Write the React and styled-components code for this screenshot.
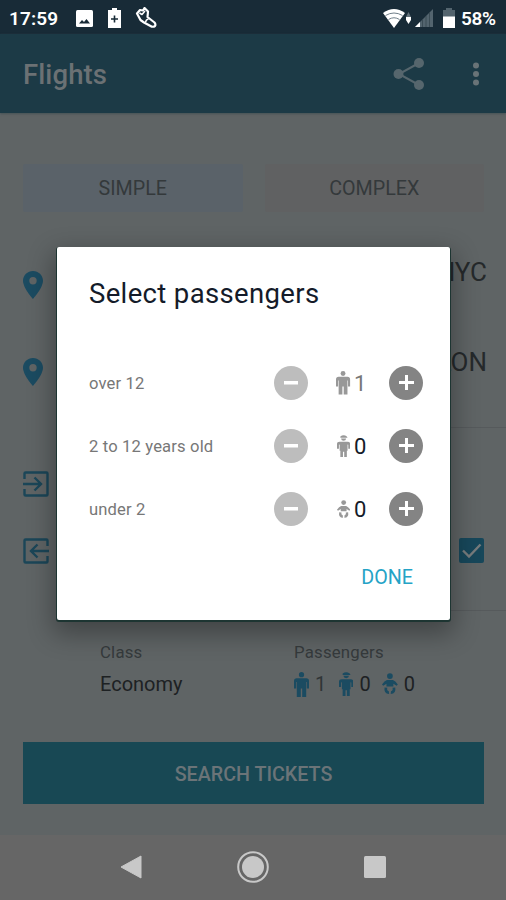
import styled, { createGlobalStyle } from 'styled-components';

const GlobalStyle = createGlobalStyle`
  * {
    box-sizing: border-box;
  }
  body {
    margin: 0;
    font-family: Roboto, "Liberation Sans", sans-serif;
    overflow: hidden;
  }
  button {
    font-family: inherit;
    border: none;
    padding: 0;
  }
  svg {
    display: block;
    flex: none;
  }
`

const Screen = styled.div`
  position: relative;
  width: 506px;
  height: 900px;
  display: flex;
  flex-direction: column;
  background-color: #5f6465;
  overflow: hidden;
`

const StatusBar = styled.div`
  height: 34px;
  padding: 2px 7px 0 9px;
  display: flex;
  justify-content: space-between;
  align-items: center;
  background-color: #182b37;
  color: #fff;
  font-size: 19px;
  font-weight: 600;
`
const StatusGroup = styled.div`
  display: flex;
  align-items: center;
`
const StatusText = styled.span`
  width: ${props => props.$width}px;
  margin-left: ${props => props.$gap || 0}px;
  white-space: nowrap;
  letter-spacing: ${props => props.$spacing || 0}px;
`
const StatusIcon = styled.svg`
  margin-left: ${props => props.$gap || 0}px;
`

const AppBar = styled.header`
  height: 79px;
  padding: 0 18px 0 23px;
  display: flex;
  align-items: center;
  background-color: #1c3a46;
  box-shadow: 0 1px 2px #465256;
`
const AppTitle = styled.h1`
  flex: 1;
  margin: 2px 0 0;
  font-size: 27.5px;
  font-weight: 500;
  letter-spacing: 0.1px;
  color: #6b7174;
`
const AppActions = styled.div`
  display: flex;
  align-items: center;
  gap: 39px;
`

const Content = styled.main`
  height: 722px;
  padding-top: 51px;
  display: flex;
  flex-direction: column;
`
const Tabs = styled.div`
  display: flex;
  gap: 22px;
  margin: 0 22px 29px 23px;
`
const Tab = styled.button`
  flex: 1;
  height: 48px;
  border-radius: 2px;
  font-size: 19.7px;
  color: #34393b;
  background-color: ${props => props.$active ? '#5a6269' : '#606162'};
`
const PlaceRow = styled.div`
  height: ${props => props.$height}px;
  padding: 0 19px 0 23px;
  display: flex;
  justify-content: space-between;
`
const PlaceIcon = styled.div`
  padding-top: 30px;
`
const PlaceCode = styled.span`
  padding-top: ${props => props.$top}px;
  font-size: 26px;
  line-height: 30px;
  color: #25292b;
`
const DateRow = styled.div`
  height: ${props => props.$height}px;
  padding: ${props => props.$top}px 22px 0 23px;
  display: flex;
  justify-content: space-between;
`
const Divider = styled.div`
  height: 1px;
  margin-left: 100px;
  background-color: #565a5c;
`
const Options = styled.div`
  display: flex;
  height: 131px;
  padding: 30px 0 0 100px;
`
const Option = styled.div`
  width: 194px;
`
const OptionLabel = styled.div`
  font-size: 16.8px;
  line-height: 22px;
  letter-spacing: 0.2px;
  color: #353a3c;
`
const OptionValue = styled.div`
  display: flex;
  align-items: center;
  height: 26px;
  margin-top: 8px;
  font-size: 20px;
  color: #1d2123;
`
const PassengerCount = styled.span`
  display: flex;
  align-items: center;
  gap: 6px;
  width: ${props => props.$width}px;
  color: ${props => props.$muted ? '#303537' : '#1d2123'};
`
const SearchButton = styled.button`
  height: 62px;
  margin: 0 22px 0 23px;
  padding-top: 2px;
  background-color: #184854;
  color: #6b7478;
  font-size: 19.7px;
  font-weight: 500;
`

const NavBar = styled.nav`
  height: 65px;
  padding: 0 120px 1px 120px;
  display: flex;
  align-items: center;
  justify-content: space-between;
  background-color: #666;
`

const Dialog = styled.section`
  position: absolute;
  left: 57px;
  top: 247px;
  width: 393px;
  height: 373px;
  padding: 30px 27px 0 32px;
  border-radius: 2px;
  background-color: #fff;
  box-shadow: 0 1px 0 1px #1d3532, 0 10px 26px 4px rgba(0, 0, 0, 0.32);
`
const DialogTitle = styled.h2`
  margin: 0 0 40px;
  font-size: 27.5px;
  font-weight: 400;
  line-height: 34px;
  letter-spacing: 0.35px;
  color: #141b29;
`
const AgeRow = styled.div`
  height: 63px;
  display: flex;
  align-items: center;
`
const AgeLabel = styled.span`
  flex: 1;
  padding-top: 1px;
  font-size: 16.6px;
  letter-spacing: 0.15px;
  color: #777;
`
const RoundButton = styled.button`
  width: 34px;
  height: 34px;
  border-radius: 50%;
  display: flex;
  align-items: center;
  justify-content: center;
  background-color: ${props => props.$disabled ? '#bdbdbd' : '#848484'};
`
const AgeCount = styled.div`
  width: 81px;
  padding: 1px 0 0 28px;
  display: flex;
  align-items: center;
  gap: 3px;
  font-size: 22px;
  color: ${props => props.$muted ? '#777' : '#141b29'};
`
const DialogFooter = styled.div`
  display: flex;
  justify-content: flex-end;
  padding: 26px 10px 0 0;
`
const DoneButton = styled.button`
  background: none;
  font-size: 19.7px;
  line-height: 24px;
  color: #25a3c6;
`

const PinIcon = () => (
  <svg width="20" height="28" viewBox="0 0 20 28">
    <path fill="#1b4b61" fillRule="evenodd" d="M10 0C4.5 0 0 4.4 0 9.8 0 17 10 28 10 28s10-11 10-18.2C20 4.4 15.5 0 10 0zm0 13.500a3.700 3.700 0 1 1 0-7.400 3.700 3.700 0 0 1 0 7.400z" />
  </svg>
)

const DepartIcon = () => (
  <svg width="26" height="26" viewBox="0 0 26 26" fill="none" stroke="#1b4658" strokeWidth="2.4">
    <path d="M1.500 8V2.500q0-1 1-1h21q1 0 1 1v21q0 1-1 1h-21q-1 0-1-1V18M0 13h17M11.500 6.500L18 13l-6.500 6.500" />
  </svg>
)

const ReturnIcon = () => (
  <svg width="26" height="26" viewBox="0 0 26 26" fill="none" stroke="#1b4658" strokeWidth="2.4">
    <path d="M24.500 8V2.500q0-1-1-1h-21q-1 0-1 1v21q0 1 1 1h21q1 0 1-1V18M26 13H9M14.500 6.500L8 13l6.500 6.500" />
  </svg>
)

const CheckIcon = () => (
  <svg width="25" height="25" viewBox="0 0 25 25">
    <rect width="25" height="25" rx="2" fill="#17475a" />
    <path d="M4 12.500l6 6L21.500 6.500" fill="none" stroke="#777b7c" strokeWidth="2.4" />
  </svg>
)

const AdultIcon = ({ size, color }) => (
  <svg width={size * 0.6} height={size} viewBox="0 0 15 25" fill={color}>
    <circle cx="7.5" cy="2.7" r="2.6" />
    <path d="M2.800 6.200h9.400Q15 6.200 15 9v7.500h-2.200V10h-.6v15H8.200v-8.500H6.800V25H2.800V10h-.6v6.500H0V9q0-2.800 2.800-2.800z" />
  </svg>
)

const ChildIcon = ({ size, color }) => (
  <svg width={size * 0.6} height={size} viewBox="0 0 15 25" fill={color}>
    <path d="M3.800 1.600Q7.500-1 11.200 1.600l.8 1.500H3.800zM4.600 4h5.800Q10.200 6.600 7.500 6.600T4.600 4z" />
    <path d="M3 7.600h9q3 0 3 2.600v5.500h-2.200V11l-.8-.2V18h-.8v7H8.200v-6H6.800v6H3.800v-7H3v-7.200l-.8.2v4.700H0v-5.500q0-2.600 3-2.600z" />
  </svg>
)

const BabyIcon = ({ size, color }) => (
  <svg width={size * 0.72} height={size} viewBox="0 0 16 22" fill={color}>
    <circle cx="8" cy="3" r="2.9" />
    <path d="M5 7h6q2.500 1 5 4.500l-1.200 1.300L11.500 10.800v2.700h-7v-2.700L1.200 12.800 0 11.500Q2.500 8 5 7z" />
    <path d="M2.600 14.500l2.800.3q-.9 2.700 1.500 3.500l.3 2.900Q1.500 20.900 2.600 14.500zM13.400 14.500l-2.800.3q.9 2.700-1.500 3.500l-.3 2.900q5.700-.3 4.600-6.700z" />
  </svg>
)

const icons = { adult: AdultIcon, child: ChildIcon, baby: BabyIcon }

const ages = [
  { label: 'over 12', kind: 'adult', count: 1, size: 23.5 },
  { label: '2 to 12 years old', kind: 'child', count: 0, size: 22 },
  { label: 'under 2', kind: 'baby', count: 0, size: 18.5 },
]

const IconSlot = styled.span`
  width: 15px;
  display: flex;
  justify-content: center;
`

const Age = ({ label, kind, count, size }) => {
  const Icon = icons[kind]
  return (
    <AgeRow>
      <AgeLabel>{label}</AgeLabel>
      <RoundButton $disabled>
        <svg width="14" height="4"><rect width="14" height="3.5" fill="#fff" /></svg>
      </RoundButton>
      <AgeCount $muted={count > 0}>
        <IconSlot><Icon size={size} color="#989898" /></IconSlot>
        {count}
      </AgeCount>
      <RoundButton>
        <svg width="15" height="15" viewBox="0 0 15 15">
          <path d="M7.500 0v15M0 7.500h15" stroke="#fff" strokeWidth="3" />
        </svg>
      </RoundButton>
    </AgeRow>
  )
}

const Status = () => (
  <StatusBar>
    <StatusGroup>
      <StatusText $width={50} $spacing={0.1}>17:59</StatusText>
      <StatusIcon $gap={17} width="17" height="17" viewBox="0 0 17 17">
        <rect width="17" height="17" rx="1.5" fill="#fff" />
        <path d="M3 13.500l3-3.500 2 2 2.500-3 3.500 4.500z" fill="#182b37" />
      </StatusIcon>
      <StatusIcon $gap={15} width="13" height="20" viewBox="0 0 13 20">
        <path d="M4 0h5v2h4v18H0V2h4z" fill="#fff" />
        <path d="M6.500 7.500v7M3 11h7" stroke="#182b37" strokeWidth="1.6" />
      </StatusIcon>
      <StatusIcon $gap={14} width="22" height="22" viewBox="0 0 22 22" fill="none" stroke="#fff" strokeLinejoin="round">
        <path d="M2 6.500L5 3l3 .5L9.500 1 13 4.500 12.500 10l7 5.500q1.500 2 .5 3.500-2 1.500-4.500 0L9 15.500 5.500 13z" strokeWidth="2.2" />
        <path d="M4.500 6l2.500 1.500L10 4M13.500 12q-2.500.5-3 3" strokeWidth="1.6" />
      </StatusIcon>
    </StatusGroup>
    <StatusGroup>
      <StatusIcon width="22" height="19" viewBox="0 0 22 19">
        <path d="M0 4Q11-4 22 4L11 19z" fill="#fff" />
        <path d="M2.500 6.500Q11 1.500 19.500 6.500M5.500 10.500Q11 7 16.500 10.500" fill="none" stroke="#71808a" strokeWidth="1" />
      </StatusIcon>
      <StatusIcon $gap={1} width="5" height="14" viewBox="0 0 5 14">
        <path d="M0 6l2.500-5L5 6z" fill="#62717a" />
        <path d="M0 6h5v3l-2.500 4L0 9z" fill="#fff" />
      </StatusIcon>
      <StatusIcon $gap={4} width="18" height="18" viewBox="0 0 18 18">
        <path d="M18 0v18H0z" fill="#53646e" />
        <path d="M5 13v5H0z" fill="#fff" />
        <path d="M7.500 10.500V18M11 7v11M14.500 3.500V18" stroke="#35464f" strokeWidth=".8" />
      </StatusIcon>
      <StatusIcon $gap={10} width="12" height="20" viewBox="0 0 12 20">
        <path d="M3 0h6v2h3v7H0V2h3z" fill="#53646e" />
        <path d="M0 8.500h12V20H0z" fill="#fff" />
      </StatusIcon>
      <StatusText $gap={6} $width={38} $spacing={-0.3}>58%</StatusText>
    </StatusGroup>
  </StatusBar>
)

const App = () => {
  return (
    <>
      <GlobalStyle />
      <Screen>
        <Status />
        <AppBar>
          <AppTitle>Flights</AppTitle>
          <AppActions>
            <svg width="32" height="34" viewBox="0 0 32 34" fill="#56666d">
              <path d="M26 6L6 17l20 11" fill="none" stroke="#56666d" strokeWidth="2" />
              <circle cx="26" cy="6" r="5" />
              <circle cx="5.5" cy="17" r="5" />
              <circle cx="26" cy="28" r="5" />
            </svg>
            <svg width="24" height="24" viewBox="0 0 24 24" fill="#697377">
              <circle cx="12" cy="3.5" r="3" />
              <circle cx="12" cy="12" r="3" />
              <circle cx="12" cy="20.5" r="3" />
            </svg>
          </AppActions>
        </AppBar>
        <Content>
          <Tabs>
            <Tab $active>SIMPLE</Tab>
            <Tab>COMPLEX</Tab>
          </Tabs>
          <PlaceRow $height={87}>
            <PlaceIcon><PinIcon /></PlaceIcon>
            <PlaceCode $top={16}>NYC</PlaceCode>
          </PlaceRow>
          <PlaceRow $height={99}>
            <PlaceIcon><PinIcon /></PlaceIcon>
            <PlaceCode $top={19}>LON</PlaceCode>
          </PlaceRow>
          <Divider />
          <DateRow $height={96} $top={43}>
            <DepartIcon />
          </DateRow>
          <DateRow $height={86} $top={14}>
            <ReturnIcon />
            <CheckIcon />
          </DateRow>
          <Divider />
          <Options>
            <Option>
              <OptionLabel>Class</OptionLabel>
              <OptionValue>Economy</OptionValue>
            </Option>
            <Option>
              <OptionLabel>Passengers</OptionLabel>
              <OptionValue>
                <PassengerCount $width={45} $muted><AdultIcon size={25} color="#1b4b61" />1</PassengerCount>
                <PassengerCount $width={43}><ChildIcon size={24} color="#1b4b61" />0</PassengerCount>
                <PassengerCount $width={40}><BabyIcon size={22} color="#1b4b61" />0</PassengerCount>
              </OptionValue>
            </Option>
          </Options>
          <SearchButton>SEARCH TICKETS</SearchButton>
        </Content>
        <NavBar>
          <svg width="22" height="24" viewBox="0 0 22 24">
            <path d="M21 1v22L1 12z" fill="#c8c8c8" stroke="#c8c8c8" strokeLinejoin="round" />
          </svg>
          <svg width="32" height="32" viewBox="0 0 32 32">
            <circle cx="16" cy="16" r="14.8" fill="none" stroke="#c8c8c8" strokeWidth="2" />
            <circle cx="16" cy="16" r="11" fill="#c8c8c8" />
          </svg>
          <svg width="22" height="22"><rect width="22" height="22" rx="1.5" fill="#c8c8c8" /></svg>
        </NavBar>
        <Dialog>
          <DialogTitle>Select passengers</DialogTitle>
          {ages.map(age => <Age key={age.kind} {...age} />)}
          <DialogFooter>
            <DoneButton>DONE</DoneButton>
          </DialogFooter>
        </Dialog>
      </Screen>
    </>
  )
}

export default App
